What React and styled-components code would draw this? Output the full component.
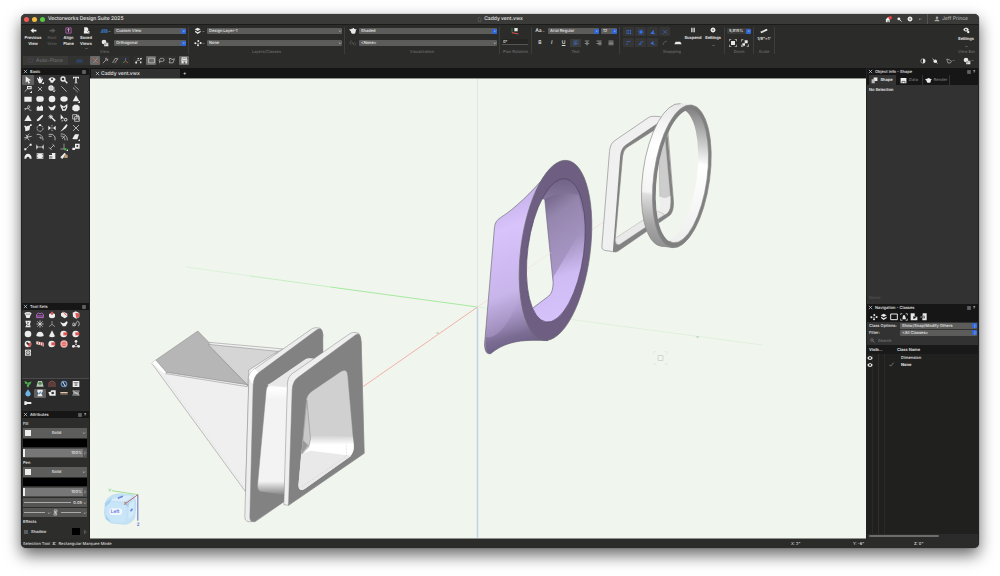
import React from 'react';
import styled, { createGlobalStyle } from 'styled-components';

const GlobalStyle = createGlobalStyle`
  * { box-sizing: border-box; }
  body {
    margin: 0;
    background: #fff;
    font-family: Inter, "Liberation Sans", sans-serif;
    font-size: 4px;
    font-weight: 500;
    line-height: 6px;
    color: #e6e6e6;
    overflow: hidden;
    text-rendering: geometricPrecision;
  }
  button, select, input {
    font: inherit;
    color: inherit;
    border: 0;
    margin: 0;
    padding: 0;
    background: none;
    border-radius: 0;
    outline: 0;
    text-rendering: inherit;
  }
  table { border-spacing: 0; }
  h2 { margin: 0; font: inherit; }
`;

/* icons are drawn on a 24 x 24 grid */
const line = { fill: 'none', stroke: 'currentColor', strokeWidth: 2 };
const red = '#e2544f';

const icons = {
  back: <path d="M2 12l10-9v6h10v6H12v6z" />,
  next: <path d="M22 12L12 3v6H2v6h10v6z" />,
  align: <g><path d="M3 3h18v18H3z" fill="none" stroke="#b060b0" strokeWidth="3" /><path d="M12 4v14M8 9h8" stroke="#d59bd5" strokeWidth="3" /></g>,
  saved: <g><path d="M4 1h10l4 5v8H4z" /><path d="M3 14h19v8H3z" /><path d="M14 13l5 6" stroke="#2b2b29" strokeWidth="2" /></g>,
  plane: <g><path d="M1 17L6 7h16l1 10z" fill="#3e73b8" /><path d="M3 12h19M10 7v10M16 7v10" stroke="#223c60" strokeWidth="1.5" /></g>,
  planeOff: <path d="M1 17L6 7h16l1 10z" fill="#2f4260" />,
  cubes: <g><circle cx="9" cy="9" r="7" /><path d="M9 11h13v11H9z" /><path d="M12 11v11M9 15h13" stroke="#2b2b29" /></g>,
  layers: <g><path d="M2 7l9-5 9 5-9 5z" /><path d="M3 11l8 5 9-5v4l-9 6-8-6z" /></g>,
  classes: <g><circle cx="4" cy="13" r="3" /><circle cx="13" cy="6" r="3" /><circle cx="20" cy="12" r="3" /><circle cx="12" cy="19" r="3" /><path d="M5 13h14" {...line} strokeDasharray="2 2" /></g>,
  teapot: <path d="M9 5h6V3h-4v2H7c-1 2-2 2-6 2 0 3 2 4 4 5 1 5 3 8 5 8h6c3 0 4-4 4-8l3-5h-4l-3-2z" />,
  glasses: <g {...line}><circle cx="7" cy="12" r="4" /><circle cx="17" cy="15" r="4" /><path d="M3 12l4-9M11 12l2 2" /></g>,
  rotatePlan: <g><path d="M10 3h10v10H10z" /><path d="M3 3v14" stroke="#43a047" strokeWidth="2" /><path d="M3 17l19 4" stroke={red} strokeWidth="3" /></g>,
  left: <path d="M2 4h20M2 9h13M2 14h20M2 19h13" {...line} />,
  center: <path d="M3 4h18M8 9h8M3 14h18M8 19h8" {...line} />,
  right: <path d="M2 4h20M9 9h13M2 14h20M9 19h13" {...line} />,
  justify: <path d="M2 4h20M2 9h20M2 14h20M2 19h20" {...line} />,
  snapGrid: <path d="M2 6h20M2 12h20M2 18h20" {...line} strokeWidth="4" strokeDasharray="4 3" />,
  snapObject: <g><path d="M3 3h18v18H3z" {...line} strokeDasharray="4 3" /><circle cx="12" cy="12" r="7" /></g>,
  snapAngle: <path d="M1 19L15 3v13l8 5z" />,
  snapCross: <path d="M4 4l16 16M20 4L4 20" {...line} />,
  snapDist: <path d="M4 20V6h16" {...line} strokeDasharray="4 2" strokeWidth="3" />,
  snapEdge: <path d="M3 20L14 4M9 20L20 4" {...line} strokeDasharray="5 1" strokeWidth="3" />,
  snapTangent: <path d="M2 15L13 3v11l9 7z" />,
  arc: <path d="M4 20C5 10 10 5 20 5" {...line} />,
  grid: <path d="M1 16L5 8h14l4 8z" />,
  pause: <path d="M5 3h5v18H5zM14 3h5v18h-5z" />,
  gear: <g><circle cx="12" cy="12" r="6" fill="none" stroke="currentColor" strokeWidth="6" /><path d="M12 1v22M1 12h22M4 4l16 16M20 4L4 20" stroke="currentColor" strokeWidth="3" strokeDasharray="4 15" /></g>,
  fitPage: <g><path d="M6 6h12v12H6z" /><path d="M1 7V1h6M17 1h6v6M23 17v6h-6M7 23H1v-6" {...line} /></g>,
  fitObject: <g><path d="M11 4h9v9h-9zM4 13h8v7H4z" /><path d="M1 8V2h6M23 16v6h-6M7 23H1v-6" {...line} /></g>,
  ruler: <g><path d="M1 14L20 5l3 5L4 19z" /><path d="M6 13l1 3M11 11l1 3" stroke="#2b2b29" /></g>,
  eyeGear: <g><path d="M1 9c5-9 15-9 19 0-4 8-14 8-19 0z" /><circle cx="10" cy="9" r="3" fill="#2b2b29" /><circle cx="18" cy="17" r="4" /></g>,
  home: <g><path d="M3 21V11l8-8 5 5v13h-4v-6H9v6z" /><circle cx="18" cy="6" r="6" fill="#ee3b3b" /></g>,
  search: <g><circle cx="9" cy="9" r="7" /><path d="M14 14l8 8" stroke="currentColor" strokeWidth="4" /></g>,
  user: <g><circle cx="12" cy="7" r="5" /><path d="M2 21c0-10 20-10 20 0z" /></g>,
  half: <g><circle cx="12" cy="12" r="9" {...line} /><path d="M12 3a9 9 0 010 18z" /></g>,
  slash: <g><circle cx="13" cy="13" r="7" /><path d="M2 3l20 19" stroke="currentColor" strokeWidth="3" /></g>,
  poly: <path d="M3 4l12 4 7 5-5 7H8z" {...line} />,
  modeX: <g><path d="M2 2l19 19" stroke={red} strokeWidth="3" /><path d="M19 3L5 21" stroke="#aaa" strokeWidth="2" /></g>,
  modePen: <path d="M3 21L15 9M14 3l7 7-4 2-5-5z" {...line} />,
  modePens: <path d="M2 20L11 5M9 21L20 6M11 5h5l4 1" {...line} />,
  modeAxis: <g fill="none" strokeWidth="2.5"><path d="M12 3v11" stroke="#4d7be0" /><path d="M12 14l-9 6" stroke="#3fa34d" /><path d="M12 14l9 6" stroke={red} /></g>,
  nodes: <g><path d="M3 19C8 2 14 22 21 4" {...line} /><path d="M1 16h6v6H1zM9 3h5v5H9zM18 3h5v5h-5zM17 15h5v6h-5z" /></g>,
  marquee: <path d="M2 4h20v16H2z" {...line} />,
  lasso: <path d="M6 17c-9-12 15-18 15-7 0 7-10 5-14 4l-2 7" {...line} />,
  polyMarquee: <path d="M4 5h7l2 4 9-3-5 14H4l3-7z" {...line} />,
  printer: <g><path d="M2 1h18v8H2zM1 9h21v6H1zM2 15h7v7H2zM15 15h6v7h-6z" /><path d="M5 5h12M4 12h15" stroke="#777" strokeWidth="2" /></g>,
  cursor: <path d="M5 1v19l5-4 4 7 4-2-4-7 7-1z" />,
  hand: <g><path d="M5 11L3 6l2-1 4 5V2h3v7l2-7 2 1v8l4-4 1 2-5 13H9z" /><path d="M24 17v7h-7z" /></g>,
  orbit: <g><path d="M1 10c5-8 17-8 22 0-3 6-6 5-8 10H8C8 15 4 14 1 10z" /><circle cx="12" cy="10" r="3" fill="#333" /></g>,
  zoom: <g><circle cx="9" cy="9" r="6" fill="none" stroke="currentColor" strokeWidth="4" /><path d="M13 13l9 9" stroke="currentColor" strokeWidth="4" /></g>,
  text: <path d="M3 2h18v6h-2l-1-3h-4v15h3v2H7v-2h3V5H6L5 8H3z" />,
  callout: <g><path d="M9 3h14v10H9z" /><path d="M12 7h8v3h-8z" fill="#333" /><path d="M9 13L2 20" {...line} /><path d="M24 17v7h-7z" /></g>,
  locus: <path d="M6 6l12 12M18 6L6 18" {...line} />,
  globe: <g><circle cx="9" cy="9" r="8" /><path d="M2 9h14M9 2v14" stroke="#666" /><path d="M18 6v14M14 16l4 5 4-5" {...line} /></g>,
  segment: <path d="M4 4l16 16" {...line} />,
  double: <path d="M3 8l14 13M8 3l14 13" {...line} strokeDasharray="4 1" />,
  rect: <path d="M1 5h22v15H1z" />,
  rounded: <rect x="1" y="4" width="22" height="16" rx="6" />,
  circle: <circle cx="12" cy="12" r="10" />,
  ellipse: <ellipse cx="12" cy="12" rx="11" ry="8" />,
  triCorner: <g><path d="M12 1l10 18H2z" /><path d="M24 17v7h-7z" /></g>,
  freehand: <path d="M1 14h9c8 0 10-9 4-9s-3 14 8 14M2 18l5-4" {...line} />,
  blob: <path d="M2 20V10l5-5 4 5 5-6 5 5v11z" />,
  bird: <path d="M1 5c7 5 9 5 12 4l8-6 2 5-6 11H8C7 13 2 12 1 5z" />,
  birdLine: <path d="M3 5c7 5 7 5 10 4l7-5v6l-4 8H8C8 13 4 12 3 5z" {...line} strokeWidth="4" />,
  octagon: <path d="M7 2h10l6 6v8l-6 6H7l-6-6V8z" />,
  triangle: <path d="M12 2l11 19H1z" />,
  dropper: <path d="M2 22l2-6L14 6l5-4 3 3-3 5L9 20z" />,
  wand: <g><path d="M9 9l13 13" stroke="currentColor" strokeWidth="4" /><path d="M8 1v14M1 8h14M3 3l10 10M13 3L3 13" {...line} /></g>,
  similar: <g><path d="M2 1v16l5-4 6 1z" /><circle cx="17" cy="17" r="4" {...line} strokeWidth="3" /><path d="M10 20l-6 1" {...line} /></g>,
  clip: <path d="M2 2h13v13H2zM8 8h14v14H8zM12 4h8v14" {...line} />,
  reshape: <g><path d="M3 8l16-4-3 15-12 3z" /><path d="M1 5h5v5H1zM18 1h5v5h-5z" /></g>,
  rotate: <g><circle cx="12" cy="13" r="9" {...line} strokeDasharray="7 2" /><path d="M12 13V7M9 1h6v5H9z" /></g>,
  mirror: <g><path d="M12 3v18" {...line} strokeDasharray="3 2" /><path d="M1 5l8 7-8 7zM23 5l-8 7 8 7z" /></g>,
  knife: <path d="M1 23L13 8l6-7 4 2-5 9L5 21z" />,
  trim: <path d="M3 3l18 18M21 3L3 21" {...line} />,
  scissors: <path d="M1 14l22-4M8 11l8-9M8 13l8 9M3 20l9-9M5 5l7 7" {...line} />,
  fillet: <path d="M2 4c12-1 19 5 19 18M10 13h5v5" {...line} />,
  chamfer: <path d="M2 4h12l7 8v10M2 10h9" {...line} />,
  offset: <path d="M2 3c13-1 20 7 20 19M2 9c8 0 13 5 13 13M6 18l9-10" {...line} />,
  push: <g><path d="M1 17L9 4h12l-5 15H5z" /><path d="M24 18v6h-6z" /></g>,
  connect: <g><path d="M5 19L19 5" {...line} strokeDasharray="4 2" /><path d="M1 16h6v6H1zM17 2h6v6h-6z" /></g>,
  dim: <path d="M2 5v14M22 5v14M2 12h20M6 9l-4 3 4 3M18 9l4 3-4 3" {...line} />,
  dimAngle: <path d="M3 13l8 8M13 3l8 8M7 17L17 7" {...line} />,
  axis: <g><path d="M12 2v16H1" {...line} strokeWidth="1.5" /><path d="M12 15h7v7h-7z" fill="#45aa4c" /><path d="M24 18v6h-6z" /></g>,
  symbol: <g><path d="M9 2h14v15H9zM1 14h8v7H1z" /><circle cx="16" cy="9" r="3" fill="#333" /></g>,
  protractor: <path d="M1 20C1 0 23 0 23 20h-6c0-8-10-8-10 0z" />,
  frame: <g><path d="M2 4h20v16H2z" /><path d="M2 8h4M18 8h4M2 16h4M18 16h4" stroke="#333" strokeWidth="2" /></g>,
  page: <g><path d="M5 3h17v18H3V9h9V4z" /><path d="M4 12h9v8H4z" fill="#999" /></g>,
  brush: <g><path d="M1 16L14 2l4 5L7 21z" /><path d="M13 8h10v10H13z" fill="#b79a72" /></g>,
  wall: <g><path d="M1 7c5-5 17-5 22 0l-4 7-2 7H7l-2-7z" /><path d="M4 10h16M9 4v8M15 4v8" stroke="#555" /></g>,
  crown: <path d="M2 20V10l5-4 5 3 5-3 5 4v10zM2 15h20" fill="none" stroke="#b466c8" strokeWidth="3" />,
  cap: <g><path d="M3 10c4-4 14-4 18 0v8c-5 5-13 5-18 0z" /><path d="M9 2h6v9H9z" fill={red} /></g>,
  redDice: <g><path d="M3 7l8-5 11 6v9l-8 5L3 15z" /><path d="M9 2l11 12" stroke={red} strokeWidth="3" /></g>,
  redCube: <g><path d="M2 5l9-4 11 5v12l-9 5L3 17z" /><path d="M10 6l11 1v11l-8 4z" fill={red} /></g>,
  redBall: <g><circle cx="11" cy="12" r="10" /><path d="M10 7h12v9H10z" fill={red} /></g>,
  redRing: <g><circle cx="12" cy="12" r="11" fill="#f0b0ac" /><circle cx="12" cy="12" r="7" fill={red} /><path d="M6 9h12M6 14h12" stroke="#f3c3c0" strokeWidth="2" /></g>,
  redHalf: <g><circle cx="12" cy="12" r="10" /><path d="M12 12l9-6v11l-7 5z" fill={red} /><path d="M8 7l6 7" stroke="#333" strokeWidth="5" /></g>,
  book: <g><path d="M1 4l11 2 11 2v12l-9-5-13-2z" /><path d="M7 4v9M14 6v10M20 8v10" stroke={red} strokeWidth="3" /></g>,
  coil: <g><path d="M4 2h16v4l-2 6 2 10H4l3-8z" /><path d="M9 7c6-2 6 3 1 5s1 6 6 4" stroke="#333" strokeWidth="2" fill="none" /></g>,
  star: <path d="M12 1v22M1 12h22M4 4l16 16M20 4L4 20" {...line} />,
  tri: <path d="M12 3v10l-9 7M12 13l9 7" {...line} strokeWidth="1.5" />,
  loop: <path d="M1 17c8 2 9-8 4-8s-4 9 4 9c3 0 1-12 7-14s8 14 2 14" {...line} />,
  dome: <path d="M1 18C1 1 23 1 23 18c-6 3-16 3-22 0z" />,
  cone: <path d="M12 1l9 18c-5 4-13 4-18 0z" />,
  trio: <g><path d="M12 4v8l-8 8h16l-8-8" {...line} /><circle cx="12" cy="4" r="4" /><circle cx="4" cy="19" r="4" /><circle cx="20" cy="19" r="4" /></g>,
  maze: <g><path d="M3 2h18v18H3z" /><circle cx="12" cy="11" r="6" fill="none" stroke="#333" strokeWidth="2" /><path d="M5 4l14 14M19 4L5 18" stroke="#333" /></g>,
  leaf: <g fill="#4caf50"><path d="M1 3l9 3 2 8-8-3zM12 8l11-4-4 9-7 4z" /><path d="M8 14h8l-2 8h-4z" /></g>,
  site: <g><path d="M1 20L6 3h12l5 17z" fill="#b6c6b6" /><circle cx="12" cy="10" r="5" fill="#4d8b4d" /></g>,
  magnet: <path d="M3 21V9c3-7 15-7 18 0v12M9 21V7M15 21V7" fill="none" stroke="#c9665f" strokeWidth="2" />,
  target: <g fill="none" strokeWidth="4"><circle cx="12" cy="12" r="8" stroke="#5b8ec9" /><path d="M8 5l8 14" stroke="#e6e6e6" strokeWidth="3" /></g>,
  doc: <g><path d="M2 3h20v18H2z" /><path d="M5 8h14M8 12h8M8 16h8" stroke="#444" strokeWidth="2" /></g>,
  drop: <path d="M12 1c5 8 8 10 8 14 0 10-16 10-16 0 0-4 3-6 8-14z" fill="#6db4e6" />,
  flask: <g><path d="M4 2h16v6l-4 5 4 9H4l4-9-4-5z" /><path d="M9 15l6-7" stroke="#5292d2" strokeWidth="4" /></g>,
  camera: <g><path d="M1 9h6l3-5h13v16H5z" /><circle cx="14" cy="12" r="4" fill="#333" /></g>,
  board: <g><path d="M1 9h22v4H1z" fill="#dccbb0" /><path d="M1 13h22v4H1z" fill="#8b765c" /></g>,
  beam: <path d="M1 6h22M1 18h22M3 10h18M3 14h18M4 6l16 12" {...line} />,
  bolt: <path d="M1 7h7v2h14v6H8v3H1z" />,
  viewBox: <path d="M2 3h20v17H2z" fill="none" stroke="currentColor" strokeWidth="3" />,
  crop: <g><path d="M2 6V2h5M17 2h5v5M22 17v5h-5M7 22H2v-5" {...line} /><path d="M7 19l2-12h6l3 12z" /></g>,
  sheet: <g><path d="M2 1h12v10h8v11H2z" /><path d="M10 9v9l9-4z" fill="#161616" /></g>,
  refs: <g><path d="M8 1h12v21H7v-6h7V8H8z" /><path d="M1 12h11M8 7l5 5-5 5" {...line} /></g>,
  shape: <g><path d="M9 2h13v12H9z" /><path d="M2 8h11v13H2z" fill="#bbb" /></g>,
  data: <g><path d="M2 3h20v18H2z" /><path d="M7 21v-6h10v6" stroke="#222" strokeWidth="2" fill="none" /></g>,
  eye: <g><path d="M1 12c5-10 17-10 22 0-5 10-17 10-22 0z" /><circle cx="12" cy="12" r="4" fill="#222" /></g>,
  check: <path d="M2 13l6 7L22 3" {...line} />,
  link: <path d="M8 3h9v7H8zM7 13h9v8H7zM12 7v11" {...line} />,
  close: <path d="M4 4l16 16M20 4L4 20" {...line} strokeWidth="3" />,
  menu: <path d="M1 5h22M1 12h22M1 19h22" {...line} strokeWidth="3" />,
  caret: <path d="M5 9l7 7 7-7" {...line} strokeWidth="3" />,
  updown: <path d="M7 9l5-5 5 5M7 15l5 5 5-5" {...line} strokeWidth="3" />,
  paper: <path d="M6 2h8l5 5v15H6z" fill="none" stroke="#777" strokeWidth="2" />,
};

const Svg = styled.svg`
  width: ${(p) => p.$size}px;
  height: ${(p) => p.$size}px;
  flex: none;
  display: block;
  fill: currentColor;
`;

const Icon = ({ name, size = 8 }) => (
  <Svg viewBox="0 0 24 24" $size={size} aria-hidden="true">{icons[name]}</Svg>
);

/* ---- window ---- */

const Window = styled.div`
  margin: 14px 21px 28px;
  height: calc(100vh - 42px);
  display: flex;
  flex-direction: column;
  overflow: hidden;
  border-radius: 5px;
  background: #2b2b29;
`;

const Shadow = styled.div`
  overflow: hidden;
  min-height: 100vh;
  ${Window} { box-shadow: 0 0 1px #222, 0 7px 16px rgba(0, 0, 0, 0.6); }
`;

const TitleBar = styled.header`
  height: 11px;
  flex: none;
  display: grid;
  grid-template-columns: 1fr auto 1fr;
  align-items: center;
  background: #3a3a38;
  border-bottom: 1px solid #1c1c1b;
  font-size: 5px;
`;

const TitleLeft = styled.div`
  display: flex;
  align-items: center;
  gap: 3px;
  padding-left: 3px;
  white-space: nowrap;
`;

const Light = styled.button`
  width: 5px;
  height: 5px;
  border-radius: 50%;
  background: ${(p) => p.$color};
`;

const FileName = styled.div`
  display: flex;
  align-items: center;
  gap: 2px;
`;

const TitleRight = styled.div`
  display: flex;
  justify-content: flex-end;
  align-items: center;
  gap: 5px;
  padding-right: 11px;
  color: #eee;
`;

const User = styled.button`
  display: flex;
  align-items: center;
  gap: 2px;
  height: 10px;
  padding-left: 6px;
  border-left: 1px solid #555;
  color: #aaa;
`;

/* ---- ribbon ---- */

const Ribbon = styled.div`
  height: 30px;
  flex: none;
  display: flex;
  padding-top: 2px;
`;

const Group = styled.section`
  width: ${(p) => p.$w}px;
  flex: none;
  height: 27px;
  display: flex;
  flex-direction: column;
  justify-content: space-between;
  border-right: 1px solid ${(p) => (p.$last ? 'transparent' : '#3d3d3b')};
`;

const GroupBody = styled.div`
  display: flex;
  align-items: flex-start;
  height: 22px;
`;

const GroupName = styled.h2`
  text-align: center;
  white-space: nowrap;
  color: #6a6a6a;
  line-height: 5px;
`;

const BigButton = styled.button`
  width: ${(p) => p.$w || 18}px;
  display: flex;
  flex-direction: column;
  align-items: center;
  line-height: 6px;
  font-weight: 600;
  color: ${(p) => (p.disabled ? '#5a5a5a' : '#eee')};
  svg:first-child { margin-bottom: ${(p) => (p.$low ? 2 : 1)}px; }
  svg:last-child:not(:first-child) { margin-top: ${(p) => (p.$low ? 3 : 0)}px; }
`;

const Stack = styled.div`
  display: flex;
  flex-direction: column;
  gap: ${(p) => p.$gap || 4}px;
  flex: ${(p) => (p.$grow ? 1 : 'none')};
  min-width: 0;
  padding: 0 2px;
`;

const Line = styled.div`
  display: flex;
  align-items: center;
  gap: ${(p) => p.$gap || 0}px;
  height: 8px;
`;

const IconButton = styled.button`
  width: ${(p) => p.$w || 12}px;
  height: 8px;
  display: flex;
  align-items: center;
  justify-content: center;
  color: ${(p) => (p.$dim ? '#555' : '#e8e8e8')};
`;

const Picker = styled.span`
  display: flex;
  align-items: center;
  flex: ${(p) => (p.$w ? 'none' : 1)};
  ${(p) => p.$w && `width: ${p.$w}px;`}
  min-width: 0;
  height: 6px;
  border-radius: 1px;
  background: ${(p) => p.$bg || '#5c5c5b'};
  select {
    appearance: none;
    flex: 1;
    min-width: 0;
    height: 6px;
    line-height: 6px;
    padding-left: 2px;
  }
  i {
    width: 5px;
    height: 5px;
    display: flex;
    align-items: center;
    justify-content: center;
    border-radius: 1px;
    background: ${(p) => (p.$blue ? '#2f66d8' : 'transparent')};
  }
`;

const Select = ({ label, value, blue, w, bg, id, icon = 'caret' }) => (
  <Picker $blue={blue} $w={w} $bg={bg}>
    <select aria-label={label} id={id} defaultValue={value}><option>{value}</option></select>
    <i><Icon name={icon} size={4} /></i>
  </Picker>
);

const AngleInput = styled.input`
  width: 26px;
  height: 6px;
  padding-left: 1px;
  background: #252524;
  border-bottom: 1px solid #555;
`;

const FormatButton = styled.button`
  width: 12px;
  height: 8px;
  display: flex;
  justify-content: center;
  align-items: center;
  font-size: 5px;
  font-weight: 600;
  font-style: ${(p) => (p.$italic ? 'italic' : 'normal')};
  text-decoration: ${(p) => (p.$underline ? 'underline' : 'none')};
  color: ${(p) => (p.$on ? '#3f7df0' : '#ddd')};
  background: ${(p) => (p.$on ? '#3b3b3a' : 'none')};
`;

const SnapGrid = styled.div`
  display: grid;
  grid-template-columns: repeat(4, 12px);
  grid-auto-rows: 9px;
  gap: 2px 0;
`;

const Snap = styled.button`
  display: flex;
  align-items: center;
  justify-content: center;
  margin-right: 1px;
  border-radius: 1px;
  color: ${(p) => (p.$off ? '#888' : '#3673ea')};
  background: ${(p) => (p.$off ? 'none' : '#363637')};
`;

const Spacer = styled.div`
  flex: 1;
`;

/* ---- mode bar ---- */

const ModeBar = styled.div`
  height: 13px;
  flex: none;
  display: flex;
  align-items: center;
  padding: 0 2px 2px;
`;

const PlaneButton = styled.button`
  width: ${(p) => p.$w}px;
  height: 9px;
  display: flex;
  align-items: center;
  justify-content: center;
  gap: 3px;
  background: ${(p) => (p.$w > 30 ? '#3a3a39' : '#323231')};
  color: #6b6b6b;
  font-size: 5px;
  &:first-child svg { color: #684568; }
`;

const Mode = styled.button`
  width: 10px;
  height: 9px;
  display: flex;
  align-items: center;
  justify-content: center;
  margin-left: ${(p) => (p.$gap ? 3 : 0)}px;
  border-radius: 1px;
  color: #e2e2e2;
  background: ${(p) => (p.$on ? '#686867' : '#30302f')};
`;

/* ---- palettes ---- */

const Main = styled.main`
  flex: 1;
  min-height: 0;
  display: flex;
`;

const Side = styled.aside`
  width: ${(p) => p.$w}px;
  flex: none;
  display: flex;
  flex-direction: column;
  background: #323232;
  border: solid #222;
  border-width: 0 1px;
`;

const Palette = styled.section`
  display: flex;
  flex-direction: column;
  flex: ${(p) => (p.$grow ? 1 : 'none')};
  min-height: 0;
`;

const PaletteHead = styled.header`
  height: 7px;
  flex: none;
  display: flex;
  align-items: center;
  gap: 2px;
  padding: 0 3px 0 1px;
  background: #161616;
  h2 { flex: 1; }
  button { display: flex; line-height: 6px; }
`;

const Head = ({ title, help }) => (
  <PaletteHead>
    <button aria-label={`Close ${title}`}><Icon name="close" size={5} /></button>
    <h2>{title}</h2>
    <button aria-label={`${title} menu`}><Icon name="menu" size={4} /></button>
    {help && <button>?</button>}
  </PaletteHead>
);

const ToolGrid = styled.div`
  display: grid;
  grid-template-columns: repeat(5, 12px);
  grid-template-rows: repeat(${(p) => p.$rows}, 1fr);
  height: ${(p) => p.$h}px;
`;

const Tool = styled.button`
  display: flex;
  align-items: center;
  justify-content: center;
  border-radius: 1px;
  color: #ededed;
  background: ${(p) => (p.$on ? '#606060' : 'none')};
`;

const Tools = ({ names, active, rows, h }) => (
  <ToolGrid $rows={rows} $h={h}>
    {names.map((n, i) => (
      <Tool key={i} $on={n === active} aria-label={n}><Icon name={n} /></Tool>
    ))}
  </ToolGrid>
);

const Categories = styled.div`
  margin-top: 20px;
  height: 33px;
  background: #2b2b2b;
  border-top: 1px solid #4a4a4a;
`;

const Attributes = styled.div`
  display: flex;
  flex-direction: column;
  gap: 1px;
  padding: 2px 2px 2px 1px;
  background: #2d2d2b;
`;

const Legend = styled.div`
  height: 7px;
  display: flex;
  align-items: center;
`;

const Style = styled.div`
  height: 10px;
  flex: none;
  display: flex;
  align-items: center;
  padding: 0 1px 0 2px;
  background: #5d5d5b;
  select {
    appearance: none;
    flex: 1;
    min-width: 0;
    text-align: center;
    text-align-last: center;
  }
`;

const Swatch = styled.button`
  width: 6px;
  height: 6px;
  background: #eee;
`;

const ColorBar = styled.button`
  height: 8px;
  flex: none;
  background: #000;
`;

const Opacity = styled.div`
  height: 10px;
  flex: none;
  display: flex;
  align-items: center;
  border: 1px solid #4b4b4a;
  border-width: 1px 0;
  background: linear-gradient(90deg, #eee 2px, #777 2px);
  input { flex: 1; min-width: 0; text-align: right; }
  button { height: 8px; margin-left: 1px; background: #555; }
`;

const Weight = styled.div`
  height: 9px;
  flex: none;
  display: flex;
  align-items: center;
  gap: 1px;
  background: #555553;
  hr { flex: 1; margin: 0 1px; border: 0; border-top: 1px solid #aaa; }
`;

const ShadowRow = styled.div`
  height: 11px;
  display: flex;
  align-items: center;
  gap: 3px;
  padding-left: 1px;
  input {
    appearance: none;
    width: 4px;
    height: 4px;
    background: #5b5b59;
  }
  label { flex: 1; }
`;

const BlackBox = styled.button`
  width: 8px;
  height: 7px;
  background: #000;
`;

/* ---- document ---- */

const Document = styled.div`
  flex: 1;
  min-width: 0;
  display: flex;
  flex-direction: column;
`;

const Tabs = styled.nav`
  height: 10px;
  flex: none;
  display: flex;
  align-items: center;
  gap: 3px;
  padding: 1px 1px 0;
  background: #141414;
  font-size: 5px;
`;

const DocTab = styled.button`
  width: 89px;
  height: 9px;
  display: flex;
  align-items: center;
  gap: 1px;
  padding-left: 4px;
  background: #303030;
`;

const Canvas = styled.div`
  flex: 1;
  min-height: 0;
  background: #f0f5ee;
  border: solid #8f918e;
  border-width: 1px 0;
  svg { display: block; width: 100%; height: 100%; }
`;

const NavText = styled.text`
  font-size: 14px;
  font-weight: 600;
  fill: #5f76e0;
`;

const Axes = () => (
  <g strokeWidth="1">
    <path d="M477 79V307" stroke="#dde4ec" />
    <path d="M477 307V538" stroke="#c6d1e6" strokeWidth="1.500" />
    <path d="M186 267L250 276" stroke="#dcf2d9" />
    <path d="M250 276L330 287" stroke="#c6efc2" />
    <path d="M330 287L477 307" stroke="#a6ea9f" />
    <path d="M477 307L762 345" stroke="#dff0dc" />
    <path d="M362 387L477 307" stroke="#f2b2aa" />
    <path d="M477 307L606 220" stroke="#f2e2dd" />
    <path d="M696 337h2M436 333h2" stroke="#9fbf9b" />
    <path d="M657.500 355.500h5v5h-5z" fill="none" stroke="#d2d7d0" />
    <path d="M653.500 354v-2.500h2.500M664 351.500h2.500v2.500M666.500 362v2.500h-2.500M656 364.500h-2.500v-2.500" fill="none" stroke="#e4e9e2" />
  </g>
);

/* duct pieces and the two loose frames */
const Transition = () => (
  <g transform="translate(470 90) scale(.33333)" stroke="#6b6b70" strokeWidth="2">
    <path d="M42 765L72 412Q74 392 90 383C135 354 180 310 232 250L260 480 232 752C150 748 105 755 60 791Q44 795 42 765z" fill="url(#lilac)" />
    <path d="M46 742Q100 745 148 620L168 690 232 752C150 748 105 755 60 791Q44 795 46 742z" fill="url(#lilacDark)" stroke="none" />
    <ellipse cx="255" cy="481" rx="104" ry="272" transform="rotate(7.400 255 481)" fill="#6e5f82" />
    <g clipPath="url(#hole)" stroke="none">
      <path d="M150 250h210v460H150z" fill="url(#inner)" />
      <path d="M222 328Q270 300 325 315L340 400 310 500 248 580z" fill="url(#wall)" />
      <path d="M187 654L235 618Q248 605 249 560L345 400V710H160z" fill="url(#floor)" />
      <path d="M150 320L218 328 223 330 248 578Q248 606 235 618L187 654 160 660z" fill="#f0f5ee" />
      <path d="M223 330L248 578Q248 606 235 618L187 654" fill="none" stroke="#6f6580" strokeWidth="2" />
      <path d="M241 488L160 545" stroke="#f2e2dd" strokeWidth="2" />
    </g>
    <ellipse cx="256" cy="481" rx="84" ry="217" transform="rotate(7.700 256 481)" fill="none" stroke="#4d425e" />
  </g>
);

const Frames = () => (
  <g transform="translate(470 90) scale(.33333)" stroke="#8c8c8c" strokeWidth="2">
    <path d="M394 470L417 185Q419 160 434 151L535 82Q543 77 568 80L590 96 609 335Q610 364 598 376L443 483Q436 488 427 485L402 481Q393 478 394 470zM434 450Q434 468 448 463L590 370Q602 360 600 335L582 125 555 118 470 172Q458 180 456 200z" fill="#f0f0f0" fillRule="evenodd" />
    <path d="M427 485L449 197Q451 174 466 164L575 90 589 110 609 335Q610 364 598 376L443 483Q436 488 427 485zM434 450Q434 468 448 463L590 370Q602 360 600 335L582 125 555 118 470 172Q458 180 456 200z" fill="#828282" fillRule="evenodd" stroke="none" />
    <path d="M566 205L582 125 600 320 590 332 568 320z" fill="#cdcdcd" strokeWidth="1" />
    <path d="M568 318Q580 330 600 318Q602 354 590 369L560 388Q572 350 568 318z" fill="#eee" stroke="none" />
    <path d="M435 444L560 363 582 373 448 463Q434 467 435 444z" fill="#e9e9e9" strokeWidth="1" />
    <g mask="url(#through)">
      <ellipse cx="601" cy="255" rx="84" ry="216" transform="rotate(7.800 601 255)" fill="url(#ring)" />
      <path d="M630 40L665 44 610 474 575 470z" fill="url(#ring)" stroke="none" />
      <ellipse cx="634" cy="259" rx="84" ry="216" transform="rotate(7.800 634 259)" fill="#7f7f7f" />
      <ellipse cx="635" cy="259" rx="75" ry="201" transform="rotate(7.800 635 259)" fill="url(#ringIn)" />
    </g>
  </g>
);

const Assembly = () => (
  <g transform="translate(140 310) scale(.33333)" stroke="#868686" strokeWidth="1.500" strokeLinejoin="round">
    <path d="M34 160L46 150 78 187 325 228 315 545z" fill="#efefef" />
    <path d="M34 160L46 150 78 187 70 190z" fill="#fff" stroke="none" />
    <path d="M205 97L428 117 413 124 325 226z" fill="#f2f2f2" />
    <path d="M203 103L413 124 325 180 322 226z" fill="#d5d5d5" />
    <path d="M46 150L172 63 205 97 203 105 322 226 78 187z" fill="#b6b6b6" />
    <path d="M78 187L320 224V230L76 191z" fill="#ededed" />
    <path d="M70 198L310 530" strokeDasharray="2 5" stroke="#ccc" fill="none" />

    <path d="M313 620L325 205Q327 187 342 177L512 58Q521 50 540 55L548 75 430 575 344 635H325Q313 634 313 620z" fill="#ededed" />
    <path d="M325 205Q327 187 342 177L356 188Q340 198 339 225z" fill="#fff" stroke="none" />
    <path d="M328 622L338 225Q339 198 356 187L524 63Q546 45 547 75L549 300 430 575 344 634Q328 638 328 622z" fill="#828282" />
    <path d="M377 242Q378 226 395 217L496 147Q504 143 525 147L560 170 470 555H430L360 545Q350 540 351 525z" fill="url(#sleeve)" />
    <path d="M395 217L496 147Q504 143 525 147L445 203 437 232 380 225z" fill="#e8e8e8" stroke="none" />
    <path d="M525 147L549 130V300L480 300z" fill="#828282" stroke="none" />

    <path d="M430 584L441 218Q443 199 458 189L628 71Q638 64 655 70L662 95 671 430 444 586z" fill="#efefef" />
    <path d="M444 586L455 240Q456 214 473 202L638 80Q661 58 662 95L671 430z" fill="#828282" />
    <path d="M474 525L497 270Q499 254 515 243L602 184Q621 174 622 198L640 405Q642 430 625 442L492 537Q474 546 474 525z" fill="#d0d0d0" />
    <path d="M487 390L503 375 637 380 640 405Q642 430 625 442L492 537Q474 546 474 525z" fill="url(#lip)" stroke="none" />
    <path d="M482 432L510 422 633 437 492 537Q474 546 474 525z" fill="#e9e9e9" stroke="none" />
    <path d="M499 270L510 385 505 410 484 432 487 390z" fill="#c8c8c8" />
    <path d="M487 390L503 406 484 430z" fill="#999" stroke="none" />
    <path d="M484 530L618 438V405" strokeDasharray="5 4" stroke="#c8c8c8" fill="none" />
  </g>
);

const NavCube = () => (
  <g transform="translate(16 406) scale(.33333)">
    <path d="M286 254L364 266" stroke="#9fe094" strokeWidth="3" />
    <path d="M285 269Q300 262 318 264L350 267Q359 278 358 300L354 336Q344 352 327 355L285 351Q267 342 264 325L266 292Q272 276 285 269z" fill="#c4e2f6" stroke="#b4d8f0" strokeWidth="2" />
    <path d="M272 294Q276 287 286 288L323 293Q330 296 330 305L327 343Q322 352 312 350L283 347Q271 341 269 328z" fill="#c9e5f8" />
    <path d="M266 292L287 275 280 290 267 303zM328 297L338 288 336 305zM268 328L284 349 268 340z" fill="#a5d0ee" />
    <path d="M287 278L335 268 347 272 326 287 284 284z" fill="#d8ecfa" />
    <path d="M337 296L352 284V325L336 340z" fill="#d3eaf9" />
    <rect x="279" y="307" width="38" height="20" rx="9" fill="#f0f8fe" />
    <NavText x="283" y="322">Left</NavText>
    <path d="M304 277L319 271M342 316L348 308" stroke="#6f86e2" strokeWidth="5" />
    <path d="M328 292L364 266" stroke="#c06a60" strokeWidth="3" />
    <path d="M364 266V344" stroke="#5b6ccc" strokeWidth="3" />
    <text x="275" y="258" fontSize="13" fill="#7ad070">Y</text>
    <text x="322" y="298" fontSize="13" fill="#a5434a">X</text>
    <text x="361" y="360" fontSize="13" fill="#4a5ad0">Z</text>
  </g>
);

const Drawing = () => (
  <svg viewBox="90 79 775 459" role="img" aria-label="Caddy vent model">
    <defs>
      <linearGradient id="lilac" x1=".3" y1="0" x2=".45" y2="1">
        <stop offset="0" stopColor="#b8a5dc" /><stop offset=".3" stopColor="#d8c3fb" /><stop offset=".65" stopColor="#c8b5ea" /><stop offset=".85" stopColor="#9d8cba" /><stop offset="1" stopColor="#6f6088" />
      </linearGradient>
      <linearGradient id="lilacDark" x1=".2" y1="0" x2=".5" y2="1">
        <stop offset="0" stopColor="#c3b0e4" stopOpacity="0" /><stop offset=".7" stopColor="#7b6c94" /><stop offset="1" stopColor="#685a7d" />
      </linearGradient>
      <linearGradient id="inner" x1="0" y1="0" x2="0" y2="1">
        <stop offset="0" stopColor="#6b5d80" /><stop offset=".3" stopColor="#9a8ab5" /><stop offset="1" stopColor="#cfbbf2" />
      </linearGradient>
      <linearGradient id="wall" x1="0" y1="0" x2=".3" y2="1">
        <stop offset="0" stopColor="#6e6183" /><stop offset=".3" stopColor="#9586ae" /><stop offset="1" stopColor="#ad9bcc" />
      </linearGradient>
      <linearGradient id="floor" x1=".45" y1="0.150" x2=".6" y2="1">
        <stop offset="0" stopColor="#b5a3d5" stopOpacity="0" /><stop offset=".45" stopColor="#d0bcf5" /><stop offset="1" stopColor="#d6c3fa" />
      </linearGradient>
      <linearGradient id="ring" gradientUnits="userSpaceOnUse" x1="0" y1="40" x2="0" y2="475">
        <stop offset="0" stopColor="#e8e8e8" /><stop offset=".3" stopColor="#fff" /><stop offset=".63" stopColor="#f4f4f4" /><stop offset=".65" stopColor="#ddd" /><stop offset=".85" stopColor="#a5a5a5" /><stop offset="1" stopColor="#909090" />
      </linearGradient>
      <linearGradient id="ringIn" x1="0" y1="0" x2="0" y2="1">
        <stop offset="0" stopColor="#858585" /><stop offset=".25" stopColor="#cdcdcd" /><stop offset=".4" stopColor="#fff" /><stop offset="1" stopColor="#eee" />
      </linearGradient>
      <linearGradient id="sleeve" x1="0" y1="0" x2="0" y2="1">
        <stop offset=".15" stopColor="#dcdcdc" /><stop offset=".22" stopColor="#fff" /><stop offset=".3" stopColor="#f3f3f3" /><stop offset=".9" stopColor="#f3f3f3" /><stop offset="1" stopColor="#858585" />
      </linearGradient>
      <linearGradient id="lip" x1="0" y1="0" x2="0" y2="1">
        <stop offset="0" stopColor="#d0d0d0" /><stop offset=".18" stopColor="#fff" /><stop offset=".4" stopColor="#fff" /><stop offset="1" stopColor="#e8e8e8" />
      </linearGradient>
      <clipPath id="hole"><ellipse cx="256" cy="481" rx="84" ry="217" transform="rotate(7.700 256 481)" /></clipPath>
      <clipPath id="ringHole"><ellipse cx="635" cy="259" rx="75" ry="201" transform="rotate(7.800 635 259)" /></clipPath>
      <mask id="through" maskUnits="userSpaceOnUse" x="480" y="20" width="280" height="480">
        <path d="M480 20h280v480H480z" fill="#fff" />
        <g clipPath="url(#ringHole)">
          <ellipse cx="604" cy="256" rx="75" ry="201" transform="rotate(7.800 604 256)" fill="#000" />
        </g>
      </mask>
    </defs>
    <Axes />
    <Transition />
    <Frames />
    <Assembly />
    <NavCube />
  </svg>
);

/* ---- object info and navigation ---- */

const InfoTabs = styled.div`
  height: 10px;
  flex: none;
  display: flex;
  padding: 0 2px;
  background: #161616;
`;

const InfoTab = styled.button`
  width: 27px;
  display: flex;
  align-items: center;
  justify-content: center;
  gap: 2px;
  border-right: 1px solid #333;
  color: ${(p) => (p.$on ? '#eee' : '#777')};
  font-weight: ${(p) => (p.$on ? 600 : 500)};
  background: ${(p) => (p.$on ? '#333' : 'none')};
  svg { color: #eee; }
`;

const InfoBody = styled.div`
  flex: 1;
  padding: 2px;
  display: flex;
  flex-direction: column;
  justify-content: space-between;
  font-weight: 600;
`;

const NameField = styled.label`
  height: 8px;
  display: flex;
  align-items: center;
  gap: 2px;
  color: #5a5a5a;
  font-weight: 400;
  input { flex: 1; min-width: 0; }
`;

const NavTabs = styled.div`
  height: 11px;
  display: flex;
  align-items: center;
  gap: 2px;
  padding-left: 3px;
  background: #161616;
  color: #eee;
`;

const Field = styled.div`
  height: 7px;
  display: grid;
  grid-template-columns: 31px 1fr;
  align-items: center;
  padding: 0 1px 0 2px;
`;

const SearchBox = styled.label`
  height: 9px;
  display: flex;
  align-items: center;
  gap: 3px;
  padding-left: 3px;
  color: #777;
  input { flex: 1; min-width: 0; }
  input::placeholder { color: #747474; }
`;

const ClassPane = styled.div`
  height: 194px;
  display: flex;
  flex-direction: column;
  justify-content: space-between;
  background: linear-gradient(90deg, transparent 5px, #2a2a29 5px, #2a2a29 6px, transparent 6px, transparent 11px, #2e2e2d 11px, #2e2e2d 12px, transparent 12px, transparent 17px, #2a2a29 17px, #2a2a29 18px, transparent 18px) #20201f;
`;

const ClassTable = styled.table`
  width: 100%;
  table-layout: fixed;
  th, td {
    padding: 0 0 0 2px;
    height: 7px;
    line-height: 6px;
    text-align: left;
  }
  th { height: 9px; background: #191919; font-weight: 600; }
  th:first-child { width: 20px; }
  th:nth-child(2) { width: 9px; }
  th:last-child { padding-left: 1px; }
  td:last-child { padding-left: 5px; }
  td:first-child { padding-left: 0; }
`;

const Scroll = styled.div`
  height: 5px;
  padding: 1px 2px;
  background: #2b2b2b;
  &::before {
    content: "";
    display: block;
    width: 65%;
    height: 2px;
    border-radius: 1px;
    background: #6c6c6b;
  }
`;

const StatusBar = styled.footer`
  height: 9px;
  flex: none;
  display: grid;
  grid-template-columns: 1fr 62px 61px 65px;
  align-items: center;
  padding-left: 2px;
  color: #d6d6d6;
  span { white-space: pre; }
`;

const basicTools = [
  'cursor', 'hand', 'orbit', 'zoom', 'text',
  'callout', 'locus', 'globe', 'segment', 'double',
  'rect', 'rounded', 'circle', 'ellipse', 'triCorner',
  'freehand', 'blob', 'bird', 'birdLine', 'octagon',
  'triangle', 'dropper', 'wand', 'similar', 'clip',
  'reshape', 'rotate', 'mirror', 'knife', 'trim',
  'scissors', 'fillet', 'chamfer', 'offset', 'push',
  'connect', 'dim', 'dimAngle', 'axis', 'symbol',
  'protractor', 'frame', 'page', 'brush',
];

const modelTools = [
  'wall', 'crown', 'cap', 'redDice', 'redCube',
  'coil', 'star', 'tri', 'bird', 'loop',
  'circle', 'dome', 'cone', 'redBall', 'redBall',
  'redHalf', 'book', 'redBall', 'redRing', 'trio',
  'maze',
];

const toolSets = [
  'leaf', 'site', 'magnet', 'target', 'doc',
  'drop', 'flask', 'camera', 'board', 'beam',
  'bolt',
];

const modes = [
  ['modeX', true], ['modePen'], ['modePens'], ['modeAxis'],
  ['nodes', false, true], ['marquee', true, true], ['lasso'], ['polyMarquee'],
  ['printer', true, true],
];

const snaps = ['snapGrid', 'snapObject', 'snapAngle', 'snapCross', 'snapDist', 'snapEdge', 'snapTangent'];

const AttributeSet = ({ name }) => (
  <>
    <Legend>{name}</Legend>
    <Style>
      <Swatch aria-label={`${name} color`} />
      <select aria-label={`${name} style`}><option>Solid</option></select>
      <Icon name="caret" size={4} />
    </Style>
    <ColorBar aria-label={`${name} swatch`} />
    <Opacity>
      <input aria-label={`${name} opacity`} defaultValue="100%" />
      <button aria-label="Step"><Icon name="updown" size={4} /></button>
    </Opacity>
  </>
);

const App = () => {
  return (
    <Shadow>
      <GlobalStyle />
      <Window>
        <TitleBar>
          <TitleLeft>
            <Light $color="#f25a52" aria-label="Close" />
            <Light $color="#f5bd3d" aria-label="Minimize" />
            <Light $color="#53c944" aria-label="Zoom" />
            <span>Vectorworks Design Suite 2025</span>
          </TitleLeft>
          <FileName><Icon name="paper" size={5} />Caddy vent.vwx</FileName>
          <TitleRight>
            <Icon name="home" size={7} />
            <Icon name="search" size={5} />
            <Icon name="gear" size={6} />
            <Icon name="caret" size={4} />
            <User><Icon name="user" size={6} />Jeff Prince</User>
          </TitleRight>
        </TitleBar>

        <Ribbon>
          <Group $w={168}>
            <GroupBody>
              <BigButton $w={24}><Icon name="back" size={7} />Previous<br />View</BigButton>
              <BigButton $w={14} disabled><Icon name="next" size={7} />Next<br />View</BigButton>
              <BigButton $w={19}><Icon name="align" size={7} />Align<br />Plane</BigButton>
              <BigButton $w={16}><Icon name="saved" size={7} />Saved<br />Views<Icon name="caret" size={3} /></BigButton>
              <Stack $grow>
                <Line>
                  <IconButton $w={18} aria-label="Working plane"><Icon name="plane" /><Icon name="caret" size={3} /></IconButton>
                  <Select label="View" value="Custom View" blue />
                </Line>
                <Line>
                  <IconButton $w={18} aria-label="Projection options"><Icon name="cubes" /></IconButton>
                  <Select label="Projection" value="Orthogonal" blue />
                </Line>
              </Stack>
            </GroupBody>
            <GroupName>View</GroupName>
          </Group>
          <Group $w={156}>
            <GroupBody>
              <Stack $grow>
                <Line>
                  <IconButton $w={16} aria-label="Layers"><Icon name="layers" /><Icon name="caret" size={3} /></IconButton>
                  <Select label="Active layer" value="Design Layer-1" />
                </Line>
                <Line>
                  <IconButton $w={16} aria-label="Classes"><Icon name="classes" /><Icon name="caret" size={3} /></IconButton>
                  <Select label="Active class" value="None" />
                </Line>
              </Stack>
            </GroupBody>
            <GroupName>Layers/Classes</GroupName>
          </Group>
          <Group $w={155}>
            <GroupBody>
              <Stack $grow>
                <Line>
                  <IconButton aria-label="Render"><Icon name="teapot" /></IconButton>
                  <Select label="Render mode" value="Shaded" blue />
                </Line>
                <Line>
                  <IconButton $dim aria-label="Data visualization"><Icon name="glasses" /></IconButton>
                  <Select label="Data visualization" value="<None>" />
                </Line>
              </Stack>
            </GroupBody>
            <GroupName>Visualization</GroupName>
          </Group>
          <Group $w={32}>
            <GroupBody>
              <Stack>
                <IconButton $w={26} aria-label="Rotate plan"><Icon name="rotatePlan" /></IconButton>
                <AngleInput aria-label="Plan rotation" defaultValue="0°" />
              </Stack>
            </GroupBody>
            <GroupName>Plan Rotation</GroupName>
          </Group>
          <Group $w={88}>
            <GroupBody>
              <Stack $grow>
                <Line $gap={2}>
                  <FormatButton aria-label="Text style">Aa<Icon name="caret" size={3} /></FormatButton>
                  <Select label="Font" value="Arial Regular" blue />
                  <Select label="Font size" value="12" blue w={16} />
                </Line>
                <Line>
                  <FormatButton>B</FormatButton>
                  <FormatButton $italic>I</FormatButton>
                  <FormatButton $underline>U</FormatButton>
                  <FormatButton $on aria-label="Align left"><Icon name="left" size={6} /></FormatButton>
                  <FormatButton aria-label="Align center"><Icon name="center" size={6} /></FormatButton>
                  <FormatButton aria-label="Align right"><Icon name="right" size={6} /></FormatButton>
                  <FormatButton aria-label="Justify"><Icon name="justify" size={6} /></FormatButton>
                </Line>
              </Stack>
            </GroupBody>
            <GroupName>Text</GroupName>
          </Group>
          <Group $w={105}>
            <GroupBody>
              <Spacer />
              <SnapGrid>
                {snaps.map((s) => <Snap key={s} aria-label={s}><Icon name={s} size={6} /></Snap>)}
                <Snap $off aria-label="Smart edge"><Icon name="arc" size={6} /></Snap>
              </SnapGrid>
              <Stack>
                <Line />
                <IconButton $w={9} aria-label="Grid"><Icon name="grid" /></IconButton>
              </Stack>
              <BigButton $low><Icon name="pause" size={6} />Suspend</BigButton>
              <BigButton $low $w={22}><Icon name="gear" size={6} />Settings<Icon name="caret" size={3} /></BigButton>
            </GroupBody>
            <GroupName>Snapping</GroupName>
          </Group>
          <Group $w={29}>
            <GroupBody>
              <Stack>
                <Line><Select label="Zoom" value="5,815%" blue w={24} bg="#3c3c3b" /></Line>
                <Line>
                  <IconButton aria-label="Fit page"><Icon name="fitPage" /></IconButton>
                  <IconButton aria-label="Fit objects"><Icon name="fitObject" /></IconButton>
                </Line>
              </Stack>
            </GroupBody>
            <GroupName>Zoom</GroupName>
          </Group>
          <Group $w={21}>
            <GroupBody>
              <BigButton $w={20}><Icon name="ruler" size={8} />1/8"=1'</BigButton>
            </GroupBody>
            <GroupName>Scale</GroupName>
          </Group>
          <Spacer />
          <Group $w={24} $last>
            <GroupBody>
              <BigButton $low $w={22}><Icon name="eyeGear" size={7} />Settings<Icon name="caret" size={3} /></BigButton>
            </GroupBody>
            <GroupName>View Bar</GroupName>
          </Group>
        </Ribbon>

        <ModeBar>
          <PlaneButton $w={45}><Icon name="marquee" size={5} />Auto-Plane</PlaneButton>
          <PlaneButton $w={22} aria-label="Plane mode"><Icon name="planeOff" /></PlaneButton>
          {modes.map(([n, on, gap]) => (
            <Mode key={n} $on={on} $gap={gap} aria-label={n}><Icon name={n} size={7} /></Mode>
          ))}
          <Spacer />
          <IconButton aria-label="Contrast"><Icon name="half" size={6} /></IconButton>
          <IconButton aria-label="Hide"><Icon name="slash" size={6} /></IconButton>
          <IconButton $w={18} aria-label="Polygon view"><Icon name="poly" size={6} /><Icon name="caret" size={3} /></IconButton>
          <IconButton $w={18} aria-label="Render options"><Icon name="cubes" size={8} /><Icon name="caret" size={3} /></IconButton>
        </ModeBar>

        <Main>
          <Side $w={69}>
            <Palette $grow>
              <Head title="Basic" />
              <Tools names={basicTools} active="cursor" rows={9} h={86} />
            </Palette>
            <Palette>
              <Head title="Tool Sets" />
              <Tools names={modelTools} rows={5} h={48} />
              <Categories>
                <Tools names={toolSets} active="flask" rows={3} h={29} />
              </Categories>
            </Palette>
            <Palette>
              <Head title="Attributes" help />
              <Attributes>
                <AttributeSet name="Fill" />
                <AttributeSet name="Pen" />
                <Weight><hr />0.05<Icon name="caret" size={4} /></Weight>
                <Weight><hr /><Icon name="caret" size={4} /><Icon name="link" size={7} /><hr /><Icon name="caret" size={4} /></Weight>
                <Legend>Effects</Legend>
                <ShadowRow>
                  <input type="checkbox" id="shadow" />
                  <label htmlFor="shadow">Shadow</label>
                  <BlackBox aria-label="Shadow color" />
                  <Icon name="updown" size={4} />
                </ShadowRow>
              </Attributes>
            </Palette>
          </Side>

          <Document>
            <Tabs>
              <DocTab><Icon name="close" size={5} />Caddy vent.vwx</DocTab>
              <button aria-label="New tab">+</button>
            </Tabs>
            <Canvas><Drawing /></Canvas>
          </Document>

          <Side $w={113}>
            <Palette $grow>
              <Head title="Object Info - Shape" help />
              <InfoTabs>
                <InfoTab $on><Icon name="shape" size={7} />Shape</InfoTab>
                <InfoTab><Icon name="data" size={7} />Data</InfoTab>
                <InfoTab><Icon name="teapot" size={7} />Render</InfoTab>
              </InfoTabs>
              <InfoBody>
                No Selection
                <NameField>Name: <input disabled /></NameField>
              </InfoBody>
            </Palette>
            <Palette>
              <Head title="Navigation - Classes" help />
              <NavTabs>
                {['classes', 'layers', 'viewBox', 'crop', 'sheet', 'refs'].map((n) => (
                  <IconButton key={n} $w={8} aria-label={n}><Icon name={n} /></IconButton>
                ))}
              </NavTabs>
              <Field>
                <label htmlFor="class-options">Class Options:</label>
                <Select id="class-options" value="Show/Snap/Modify Others" blue icon="updown" />
              </Field>
              <Field>
                <label htmlFor="filter">Filter:</label>
                <Select id="filter" value="<All Classes>" blue icon="updown" />
              </Field>
              <SearchBox><Icon name="zoom" size={5} /><input aria-label="Search" placeholder="Search" /></SearchBox>
              <ClassPane>
                <ClassTable>
                  <thead>
                    <tr><th>Visib...</th><th aria-label="Active" /><th>Class Name</th></tr>
                  </thead>
                  <tbody>
                    <tr><td><Icon name="eye" size={6} /></td><td /><td>Dimension</td></tr>
                    <tr><td><Icon name="eye" size={6} /></td><td><Icon name="check" size={5} /></td><td><b>None</b></td></tr>
                  </tbody>
                </ClassTable>
                <Scroll />
              </ClassPane>
            </Palette>
          </Side>
        </Main>

        <StatusBar>
          <span>Selection Tool  <b>X:</b>  Rectangular Marquee Mode</span>
          <span>X: 2"</span>
          <span>Y: -6"</span>
          <span>Z: 0"</span>
        </StatusBar>
      </Window>
    </Shadow>
  );
};

export default App;
